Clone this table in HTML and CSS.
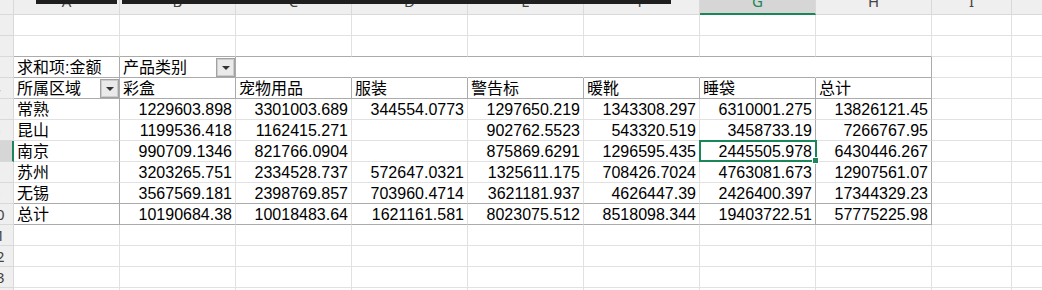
FILE: index.html
```html
<!DOCTYPE html>
<html lang="zh-CN">
<head>
  <meta charset="UTF-8" />
  <title>数据透视表 - 金额</title>
  <meta name="viewport" content="width=device-width, initial-scale=1.0" />
  <link rel="stylesheet" href="styles.css">
</head>
<body>
  <div class="sheet" id="sheet">
    <div class="bar bar-1"></div>
    <div class="bar bar-2"></div>
  </div>

  <script>
    const cols = ['A', 'B', 'C', 'D', 'E', 'F', 'G', 'H', 'I', 'J'];
    const activeRow = 7;
    const activeCol = 'G';

    const dropdown = '<i class="dd"></i>';
    const pivot = {
      3: ['求和项:金额', '产品类别' + dropdown, '', '', '', '', '', ''],
      4: ['所属区域' + dropdown, '彩盒', '宠物用品', '服装', '警告标', '暖靴', '睡袋', '总计'],
      5: ['常熟', '1229603.898', '3301003.689', '344554.0773', '1297650.219', '1343308.297', '6310001.275', '13826121.45'],
      6: ['昆山', '1199536.418', '1162415.271', '', '902762.5523', '543320.519', '3458733.19', '7266767.95'],
      7: ['南京', '990709.1346', '821766.0904', '', '875869.6291', '1296595.435', '2445505.978', '6430446.267'],
      8: ['苏州', '3203265.751', '2334528.737', '572647.0321', '1325611.175', '708426.7024', '4763081.673', '12907561.07'],
      9: ['无锡', '3567569.181', '2398769.857', '703960.4714', '3621181.937', '4626447.39', '2426400.397', '17344329.23'],
      10: ['总计', '10190684.38', '10018483.64', '1621161.581', '8023075.512', '8518098.344', '19403722.51', '57775225.98']
    };

    const sheet = document.getElementById('sheet');

    function addCell(cls, html) {
      const div = document.createElement('div');
      div.className = cls;
      if (html) div.innerHTML = html;
      sheet.appendChild(div);
      return div;
    }

    // column letters
    addCell('corner');
    cols.forEach(c => {
      addCell('hd' + (c === activeCol ? ' hd-on' : ''), `<span>${c}</span>`);
    });

    for (let row = 1; row <= 14; row++) {
      addCell('rh' + (row === activeRow ? ' rh-on' : ''), `<span>${row}</span>`);
      const vals = pivot[row] || [];

      cols.forEach((c, ci) => {
        let cls = 'c';
        // pivot table frame covers A..H, rows 3..10
        if (ci < 8) {
          if ([2, 3, 4, 9, 10].includes(row)) cls += ' bb';
          if (row === 3) cls += (ci <= 1 || ci === 7) ? ' br' : ' nr';
          if (row === 4) cls += ' br';
          if (row >= 5 && row <= 10) {
            if (ci === 0 || ci >= 6) cls += ' br';
            if (ci > 0) cls += ' num';
          }
        }
        const text = vals[ci] || '';
        const html = text ? text.replace(/^([^<]*)/, '<span>$1</span>') : '';
        const div = addCell(cls, html);

        if (row === activeRow && c === activeCol) {
          div.classList.add('active');
          div.insertAdjacentHTML('beforeend', '<b class="sel"><b class="handle"></b></b>');
        }
      });
    }
  </script>
</body>
</html>
```

FILE: styles.css
```css
body {
  margin: 0;
  background: #fff;
  overflow: hidden;
  font-family: "Liberation Sans", "Noto Sans CJK SC", sans-serif;
}
.sheet {
  position: relative;
  display: grid;
  grid-template-columns: 14px 106px repeat(7, 116px) 80px 116px;
  grid-template-rows: 15px;
  grid-auto-rows: 21px;
}
.bar {
  position: absolute;
  top: 0;
  height: 4px;
  background: #1f1f1f;
  z-index: 5;
}
.bar-1 { left: 36px; width: 81px; }
.bar-2 { left: 122px; width: 549px; }

/* headers */
.corner,
.hd,
.rh {
  box-sizing: border-box;
  background: #efefef;
  border-right: 1px solid #d9d9d9;
  border-bottom: 1px solid #d9d9d9;
  overflow: hidden;
  font-family: "Noto Sans", sans-serif;
  font-size: 15px;
  color: #444;
}
.hd {
  display: flex;
  justify-content: center;
}
.hd span {
  display: block;
  line-height: 14px;
  margin-top: -6px;
}
.hd-on {
  background: #d6d6d6;
  color: #1b8657;
  border-bottom: 2px solid #1b8657;
}
.rh {
  display: flex;
}
.rh span {
  flex-shrink: 0;
  width: 30px;
  margin-left: -19px;
  text-align: center;
  line-height: 20px;
}
.rh-on {
  background: #d6d6d6;
  border-right: 2px solid #1b8657;
}

/* cells */
.c {
  box-sizing: border-box;
  display: flex;
  align-items: flex-start;
  padding: 2px 3px 0 3px;
  border-right: 1px solid #e1e1e1;
  border-bottom: 1px solid #e1e1e1;
  font-size: 16px;
  line-height: 18px;
  white-space: nowrap;
  color: #000;
}
.c.num { justify-content: flex-end; }
.c.br { border-right-color: #ababab; }
.c.bb { border-bottom-color: #ababab; }
.c.nr { border-right-color: #fff; }

.dd {
  box-sizing: border-box;
  width: 19px;
  height: 19px;
  margin: -1px -3px 0 auto;
  display: flex;
  align-items: center;
  justify-content: center;
  border: 1px solid #a2a2a2;
  box-shadow: inset 0 0 0 1px #cdcdcd;
  background: #eaeaea;
}
.dd::after {
  content: "";
  width: 0;
  height: 0;
  margin-top: 1px;
  border-left: 4px solid transparent;
  border-right: 4px solid transparent;
  border-top: 4px solid #333;
}

/* selected cell */
.active { position: relative; }
.sel {
  position: absolute;
  left: -1px;
  top: -1px;
  width: 118px;
  height: 22px;
  box-sizing: border-box;
  border: 2px solid #1b8657;
  z-index: 3;
}
.handle {
  position: absolute;
  left: 112px;
  top: 16px;
  width: 5px;
  height: 5px;
  background: #1b8657;
  box-shadow: 0 0 0 1px #fff;
}
```
